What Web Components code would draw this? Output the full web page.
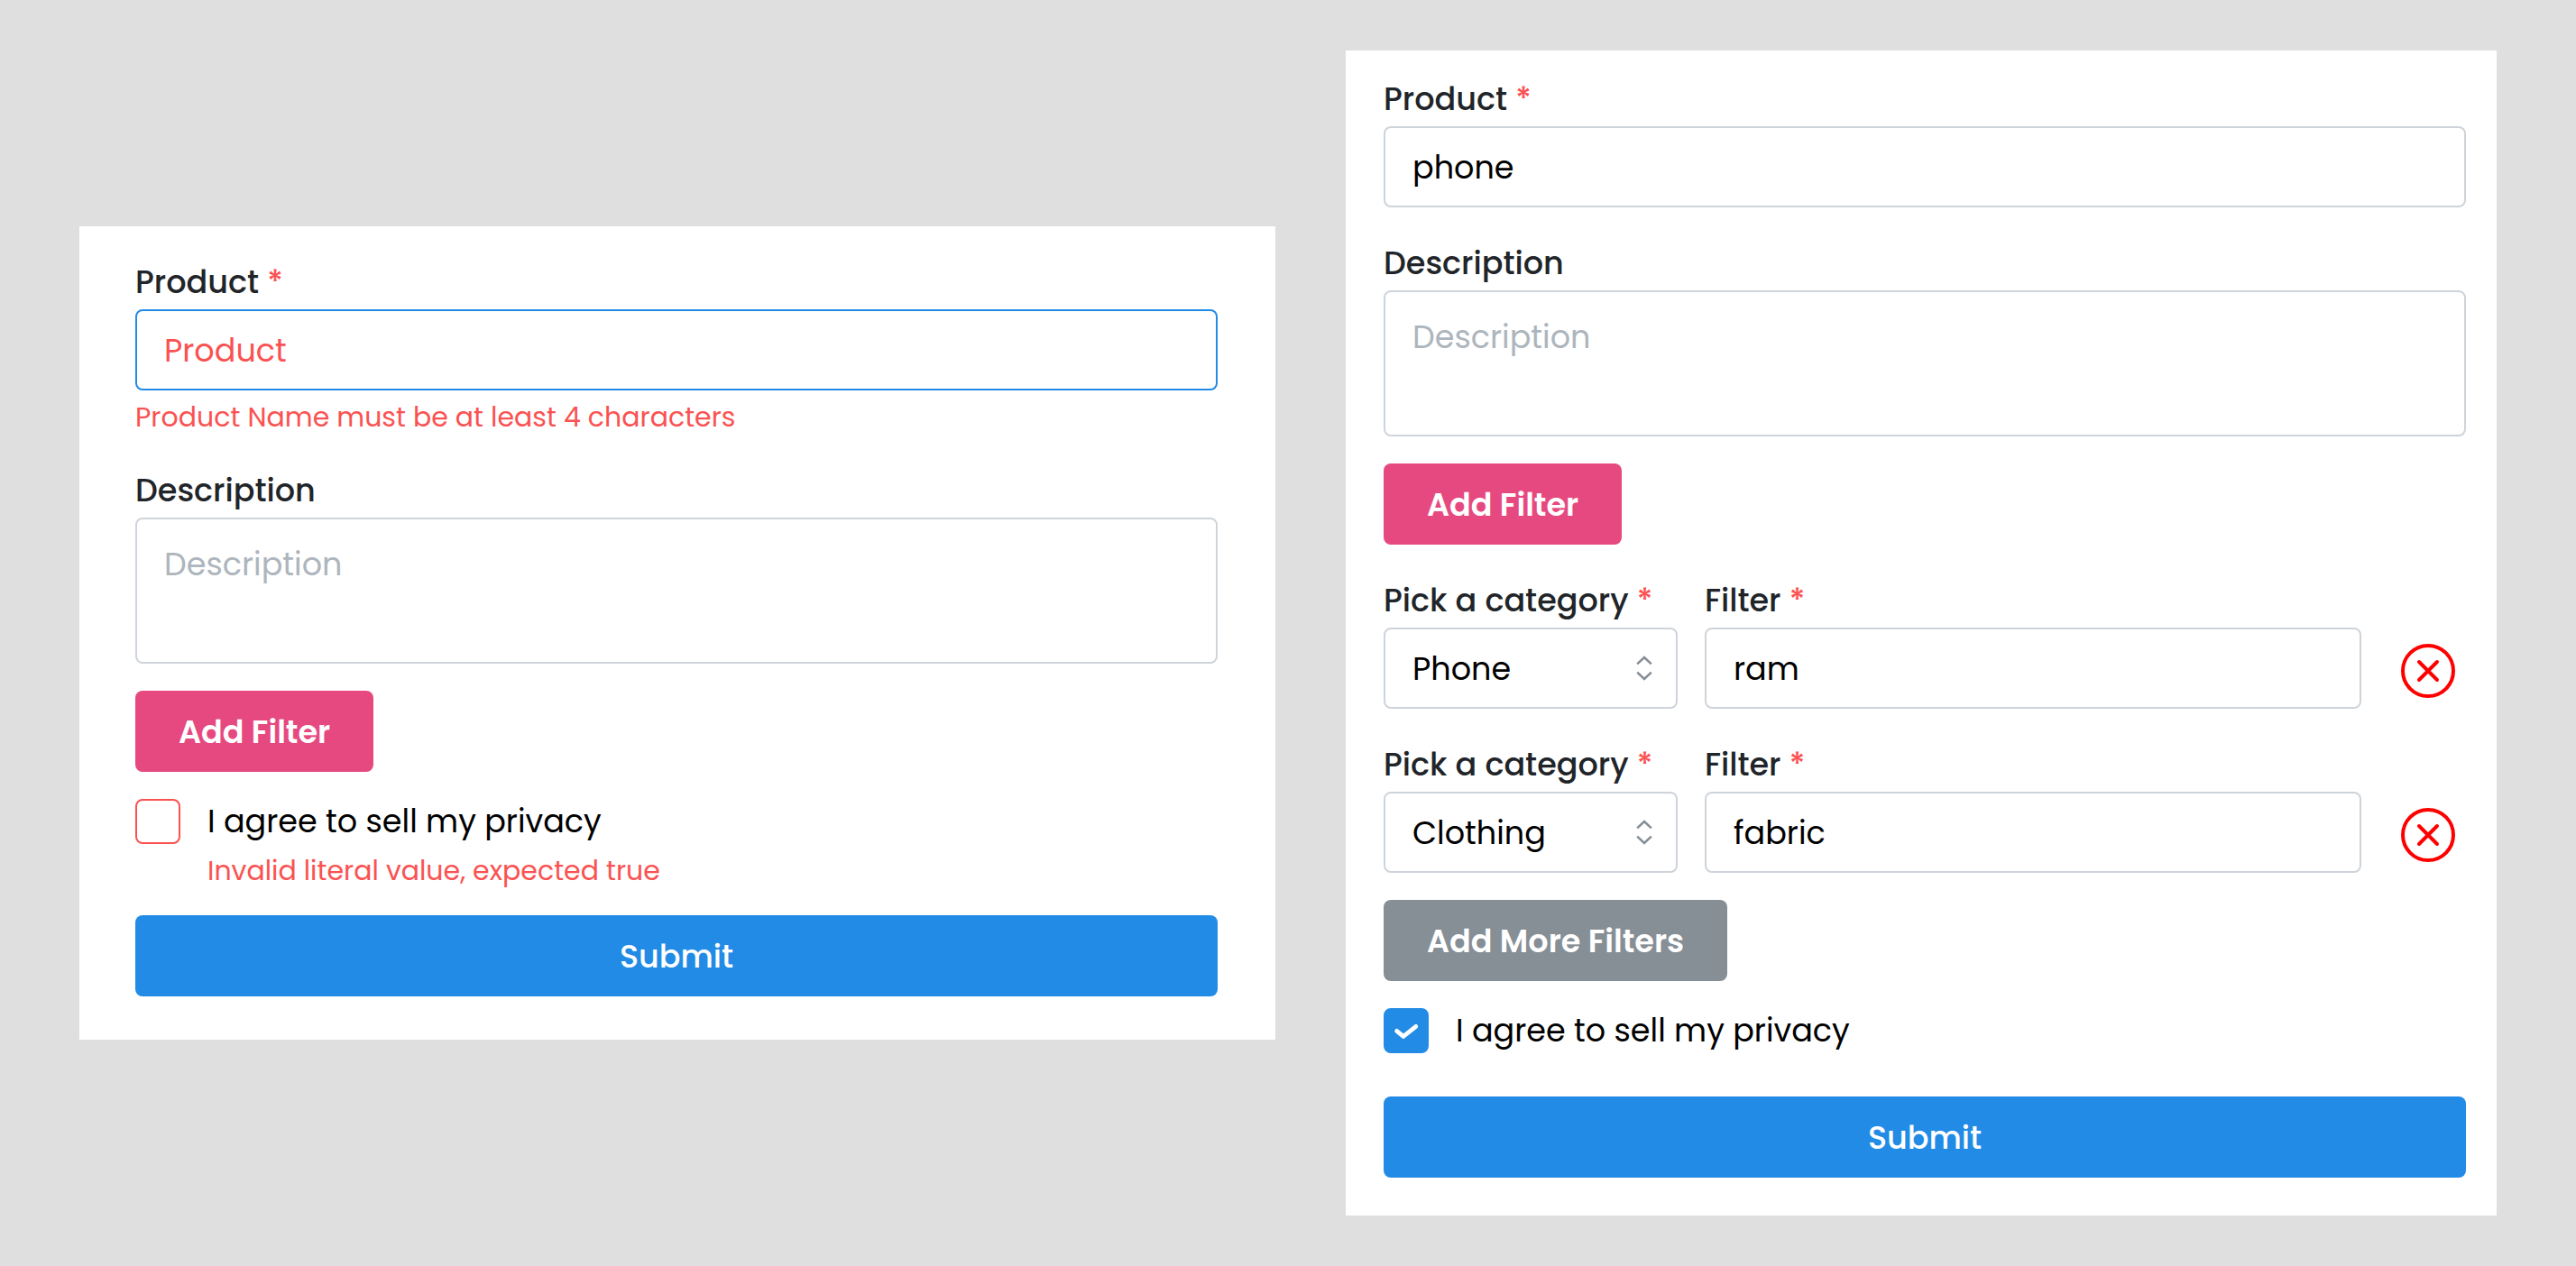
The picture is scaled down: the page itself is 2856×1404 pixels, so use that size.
<!DOCTYPE html>
<html lang="en">
<head>
<meta charset="utf-8">
<meta name="viewport" content="width=device-width, initial-scale=1">
<title>Product form</title>
<style>
  :root {
    --ink: #000;
    --label: #212529;
    --error: #fa5252;
    --muted: #adb5bd;
    --line: #ced4da;
    --blue: #228be6;
    --pink: #e64980;
    --gray: #868e96;
    --radius: 8px;
    --control: 90px;
  }
  body {
    margin: 0;
    background: #dfdfdf;
    color: var(--ink);
    font-family: Poppins, Inter, "Open Sans", sans-serif;
    font-size: 35px;
  }
</style>
</head>
<body>
<form-board>
  <form-card class="invalid">
    <text-field required active placeholder="Product" error="Product Name must be at least 4 characters">Product</text-field>
    <text-field multiline placeholder="Description">Description</text-field>
    <form-button tone="pink">Add Filter</form-button>
    <check-field error="Invalid literal value, expected true">I agree to sell my privacy</check-field>
    <form-button tone="blue" wide>Submit</form-button>
  </form-card>
  <form-card class="filled">
    <text-field required value="phone">Product</text-field>
    <text-field multiline placeholder="Description">Description</text-field>
    <form-button tone="pink">Add Filter</form-button>
    <filter-row category="Phone" filter="ram"></filter-row>
    <filter-row category="Clothing" filter="fabric"></filter-row>
    <form-button tone="gray">Add More Filters</form-button>
    <check-field checked>I agree to sell my privacy</check-field>
    <form-button tone="blue" wide>Submit</form-button>
  </form-card>
</form-board>

<script>
const FIELD_CSS = `
  * { box-sizing: border-box; }
  :host { display: block; min-width: 0; }
  label { display: block; line-height: 52px; margin-bottom: 4px; font-weight: 500; color: var(--label); white-space: nowrap; }
  .star, .error { color: var(--error); }
  .error { margin: 10px 0 0; font-size: 30px; line-height: 39px; }
  input, textarea, select {
    display: block; width: 100%; margin: 0; font: inherit; color: var(--ink);
    background: #fff; border: 2px solid var(--line); border-radius: var(--radius);
    outline: none; appearance: none;
  }
  input, select { height: var(--control); padding: 0 30px; }
  textarea { height: 162px; padding: 23px 30px; line-height: 54px; resize: none; }
  ::placeholder { color: var(--muted); opacity: 1; }
`;

function define(name, render) {
  customElements.define(name, class extends HTMLElement {
    constructor() {
      super();
      this.attachShadow({ mode: "open" });
    }
    connectedCallback() {
      this.shadowRoot.innerHTML = render(this);
    }
  });
}

const star = host => host.hasAttribute("required") ? ' <span class="star" aria-hidden="true">*</span>' : "";

define("form-board", () => `
  <style>
    :host {
      display: grid; grid-template-columns: 1326fr 1276fr; align-items: center; column-gap: 78px;
      box-sizing: border-box; min-height: 100vh; padding: 0 88px;
    }
  </style>
  <slot></slot>`);

define("form-card", () => `
  <style>
    :host { display: block; box-sizing: border-box; min-width: 0; background: #fff; }
    :host(.invalid) { padding: 36px 64px 48px 62px; }
    :host(.filled) { padding: 28px 34px 42px 42px; }
    form { display: flex; flex-direction: column; gap: 30px; }
    ::slotted(text-field:not(:first-child)), ::slotted(filter-row) { margin-top: 6px; }
  </style>
  <form novalidate onsubmit="return false"><slot></slot></form>`);

define("text-field", host => {
  const placeholder = host.getAttribute("placeholder") || "";
  const error = host.getAttribute("error");
  return `
  <style>${FIELD_CSS}
    :host([active]) input { border-color: var(--blue); }
    :host([error]) ::placeholder { color: var(--error); }
  </style>
  <label for="control"><slot></slot>${star(host)}</label>
  ${host.hasAttribute("multiline")
    ? `<textarea id="control" placeholder="${placeholder}"></textarea>`
    : `<input id="control" type="text" placeholder="${placeholder}" value="${host.getAttribute("value") || ""}">`}
  ${error ? `<p class="error">${error}</p>` : ""}`;
});

define("select-field", host => `
  <style>${FIELD_CSS}
    .box { display: grid; align-items: center; }
    .box > * { grid-area: 1 / 1; }
    svg { justify-self: end; margin-right: 28px; pointer-events: none; }
  </style>
  <label for="control"><slot></slot>${star(host)}</label>
  <div class="box">
    <select id="control"><option>${host.getAttribute("value")}</option></select>
    <svg width="18" height="28" viewBox="0 0 18 28" fill="none" stroke="#868e96" stroke-width="2.6" aria-hidden="true">
      <path d="M1.200 9.400 9 2l7.800 7.400M1.200 18.600 9 26l7.800-7.400"/>
    </svg>
  </div>`);

define("filter-row", host => `
  <style>
    :host { display: grid; grid-template-columns: 326fr 728fr 86px; column-gap: 30px; align-items: end; }
    button {
      display: flex; align-items: center; justify-content: center; height: 84px;
      padding: 0 0 0 2px; border: 0; background: none; color: #f00; cursor: pointer;
    }
  </style>
  <select-field required value="${host.getAttribute("category")}">Pick a category</select-field>
  <text-field required value="${host.getAttribute("filter")}">Filter</text-field>
  <button type="button" aria-label="Remove filter">
    <svg width="60" height="60" viewBox="0 0 60 60" fill="none" stroke="currentColor" stroke-width="4" stroke-linecap="round">
      <circle cx="30" cy="30" r="28"/>
      <path d="M20 20 40 40M40 20 20 40"/>
    </svg>
  </button>`);

define("form-button", () => `
  <style>
    :host { display: flex; }
    button {
      height: var(--control); padding: 0 48px; border: 0; border-radius: var(--radius);
      background: var(--blue); color: #fff; font: inherit; font-weight: 600; white-space: nowrap; cursor: pointer;
    }
    :host([tone="pink"]) button { background: var(--pink); }
    :host([tone="gray"]) button { background: var(--gray); }
    :host([wide]) button { flex: 1; font-weight: 500; }
  </style>
  <button type="button"><slot></slot></button>`);

define("check-field", host => {
  const error = host.getAttribute("error");
  return `
  <style>${FIELD_CSS}
    :host { display: flex; gap: 30px; min-height: 68px; }
    .box { display: grid; width: 50px; height: 50px; }
    .box > * { grid-area: 1 / 1; }
    input { width: 50px; height: 50px; padding: 0; }
    input:checked { background: var(--blue); border-color: var(--blue); }
    svg { pointer-events: none; }
    input:not(:checked) + svg { visibility: hidden; }
    :host([error]) input { border-color: var(--error); }
    label { margin: 0; line-height: 50px; font-weight: 400; color: var(--ink); }
  </style>
  <div class="box">
    <input id="control" type="checkbox" ${host.hasAttribute("checked") ? "checked" : ""}>
    <svg width="50" height="50" viewBox="0 0 50 50" fill="none" stroke="#fff" stroke-width="4.800" stroke-linecap="round" stroke-linejoin="round" aria-hidden="true">
      <path d="M14.600 25.400 21.900 31.400 35.800 20.400"/>
    </svg>
  </div>
  <div>
    <label for="control"><slot></slot></label>
    ${error ? `<p class="error">${error}</p>` : ""}
  </div>`;
});
</script>
</body>
</html>
